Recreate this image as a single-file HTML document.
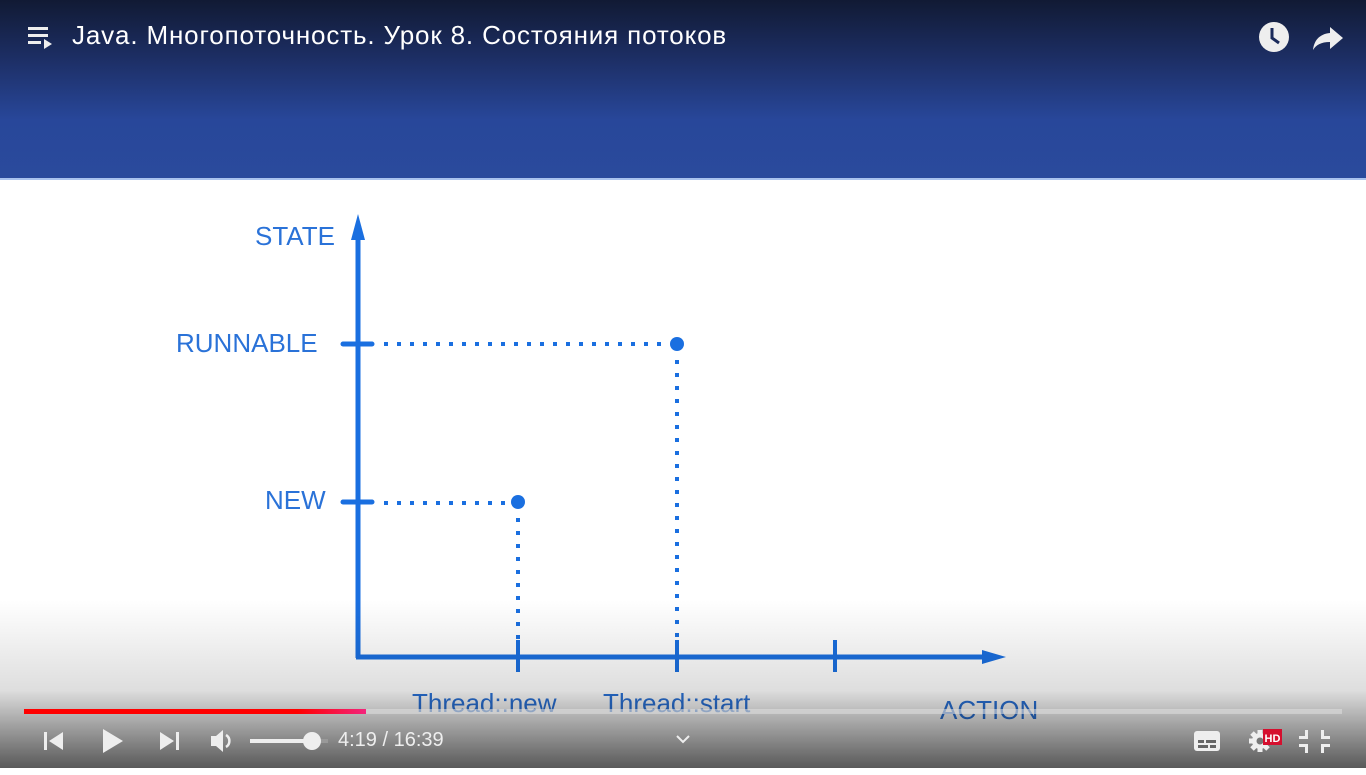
<!DOCTYPE html>
<html><head><meta charset="utf-8"><style>
html,body{margin:0;padding:0;width:1366px;height:768px;overflow:hidden;background:#fff;font-family:"Liberation Sans","Noto Sans CJK SC",sans-serif}
#top{position:absolute;left:0;top:0;width:1366px;height:178px;background:linear-gradient(#111a34 0px,#1d2f66 60px,#28479a 120px,#2a4a9c 178px)}
#top:after{content:"";position:absolute;left:0;bottom:-2px;width:100%;height:2px;background:#a9c2ee}
#title{position:absolute;left:72px;top:20px;color:#fff;font-size:26px;letter-spacing:0.85px}
svg{position:absolute;left:0;top:0}
.lbl{position:absolute;color:#2a72d8;font-size:26px}
#shade{position:absolute;left:0;top:600px;width:1366px;height:168px;background:linear-gradient(rgba(0,0,0,0) 0px,rgba(0,0,0,0.13) 90px,rgba(0,0,0,0.4) 130px,rgba(0,0,0,0.65) 168px)}
#time{position:absolute;left:338px;top:729px;color:#eee;font-size:20px}
</style></head><body>
<div id="top">
<svg width="30" height="30" style="left:26px;top:24px" viewBox="0 0 30 30"><rect x="2" y="3" width="20" height="3" fill="#eee"/><rect x="2" y="10" width="20" height="3" fill="#eee"/><rect x="2" y="17" width="13" height="3" fill="#eee"/><path d="M18 15 L26 20 L18 25Z" fill="#eee"/></svg>
<div id="title">Java. Многопоточность. Урок 8. Состояния потоков</div>
<svg width="36" height="36" style="left:1256px;top:19px" viewBox="0 0 36 36"><circle cx="18" cy="18" r="15" fill="#eee"/><path d="M16 9 V19 L23 24" stroke="#1a2a5a" stroke-width="3" fill="none"/></svg>
<svg width="36" height="36" style="left:1310px;top:19px" viewBox="0 0 36 36"><path d="M20 8 L33 19 L20 30 V23 C11 23 6 26 3 31 C4 22 9 15 20 14Z" fill="#eee"/></svg>
</div>
<svg width="1366" height="768">
<g stroke="#1a6fe0" fill="#1a6fe0">
<line x1="358" y1="658" x2="358" y2="232" stroke-width="5"/>
<path d="M351 240 L358 214 L365 240Z" stroke="none"/>
<line x1="356" y1="657" x2="985" y2="657" stroke-width="5"/>
<path d="M982 650 L1006 657 L982 664Z" stroke="none"/>
<line x1="343" y1="344" x2="372" y2="344" stroke-width="5" stroke-linecap="round"/>
<line x1="343" y1="502" x2="372" y2="502" stroke-width="5" stroke-linecap="round"/>
<line x1="384" y1="344" x2="662" y2="344" stroke-width="4" stroke-dasharray="4,9"/>
<line x1="384" y1="503" x2="510" y2="503" stroke-width="4" stroke-dasharray="4,9"/>
<line x1="677" y1="360" x2="677" y2="640" stroke-width="4" stroke-dasharray="4,9"/>
<line x1="518" y1="518" x2="518" y2="640" stroke-width="4" stroke-dasharray="4,9"/>
<circle cx="677" cy="344" r="7" stroke="none"/>
<circle cx="518" cy="502" r="7" stroke="none"/>
<line x1="518" y1="640" x2="518" y2="672" stroke-width="4"/>
<line x1="677" y1="640" x2="677" y2="672" stroke-width="4"/>
<line x1="835" y1="640" x2="835" y2="672" stroke-width="4"/>
</g></svg>
<div class="lbl" style="left:255px;top:221px">STATE</div>
<div class="lbl" style="left:176px;top:328px">RUNNABLE</div>
<div class="lbl" style="left:265px;top:485px">NEW</div>
<div class="lbl" style="left:412px;top:688px">Thread::new</div>
<div class="lbl" style="left:603px;top:688px">Thread::start</div>
<div class="lbl" style="left:940px;top:695px">ACTION</div>
<div id="shade"></div>
<div style="position:absolute;left:24px;top:709px;width:1318px;height:5px;background:rgba(220,220,220,0.6)"></div>
<div style="position:absolute;left:24px;top:709px;width:342px;height:5px;background:linear-gradient(90deg,#f00 0,#f00 80%,#f3257c 100%)"></div>
<svg width="1366" height="60" style="top:715px">
<g fill="#eee">
<rect x="44" y="17" width="3" height="18"/><path d="M63 17 V35 L49 26Z"/>
<path d="M103 14 L123 26 L103 38Z"/>
<path d="M160 17 L174 26 L160 35Z"/><rect x="176" y="17" width="3" height="18"/>
<path d="M211 21 H216 L223 15 V37 L216 31 H211Z"/>
<path d="M226 20 A7 7 0 0 1 226 32" stroke="#eee" stroke-width="2.5" fill="none"/>
<rect x="250" y="24" width="62" height="4"/><rect x="312" y="24" width="16" height="4" fill="#999"/>
<circle cx="312" cy="26" r="9"/>
<path d="M677 21 L683 27 L689 21" stroke="#eee" stroke-width="2" fill="none"/>
<rect x="1194" y="16" width="26" height="20" rx="3"/>
<g fill="#666"><rect x="1198" y="25" width="6" height="3"/><rect x="1206" y="25" width="10" height="3"/><rect x="1198" y="30" width="10" height="3"/><rect x="1210" y="30" width="6" height="3"/></g>
<circle cx="1260" cy="26" r="8"/>
<g stroke="#eee" stroke-width="5"><line x1="1260" y1="15" x2="1260" y2="37"/><line x1="1249" y1="26" x2="1271" y2="26"/><line x1="1252" y1="18" x2="1268" y2="34"/><line x1="1268" y1="18" x2="1252" y2="34"/></g>
<circle cx="1260" cy="26" r="3.5" fill="#777"/>
<rect x="1305" y="15" width="3" height="9"/><rect x="1299" y="21" width="9" height="3"/>
<rect x="1321" y="15" width="3" height="9"/><rect x="1321" y="21" width="9" height="3"/>
<rect x="1305" y="29" width="3" height="9"/><rect x="1299" y="29" width="9" height="3"/>
<rect x="1321" y="29" width="3" height="9"/><rect x="1321" y="29" width="9" height="3"/>
</g>
<rect x="1263" y="14" width="19" height="16" fill="#d50f2e"/>
<text x="1272.5" y="27" fill="#fff" font-family="Liberation Sans" font-weight="bold" font-size="11" text-anchor="middle">HD</text>
</svg>
<div id="time">4:19 / 16:39</div>
</body></html>
